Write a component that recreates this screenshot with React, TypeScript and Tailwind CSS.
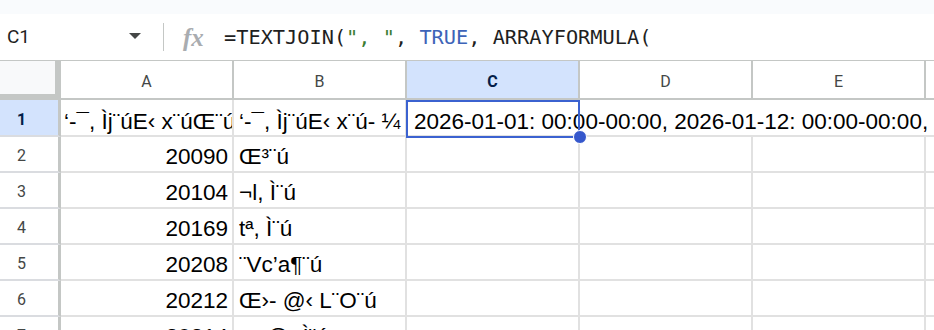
const columns = ["A", "B", "C", "D", "E"];

const rows: { num: string; a: string; b: string }[] = [
  { num: "2", a: "20090", b: "Œ³¨ú" },
  { num: "3", a: "20104", b: "¬l, Ì¨ú" },
  { num: "4", a: "20169", b: "tª, Ì¨ú" },
  { num: "5", a: "20208", b: "¨Vc’a¶¨ú" },
  { num: "6", a: "20212", b: "Œ›- @‹ L¨O¨ú" },
  { num: "7", a: "20214", b: "¬‹ @› Ì¨ú" },
];

const cellText = "font-['Liberation_Sans',Arial,sans-serif] text-[22.5px] leading-[26px] text-black whitespace-nowrap";

function FormulaBar() {
  return (
    <div className="flex h-[47px] items-center border-b border-[#c4c7c5] bg-white">
      <div className="flex w-[150px] items-center justify-between pl-[7px] pr-[9px]">
        <span className="font-['Roboto',Arial,sans-serif] text-[19px] text-[#1f1f1f]">C1</span>
        <span className="mt-[-3px] h-0 w-0 border-l-[6px] border-r-[6px] border-t-[6px] border-l-transparent border-r-transparent border-t-[#444746]" />
      </div>
      <div className="ml-[13px] h-[28px] w-px bg-[#c4c7c5]" />
      <span className="ml-[19px] w-[22px] font-['Liberation_Serif',serif] text-[25px] font-bold italic leading-none text-[#a9acb0]">
        fx
      </span>
      <div className="ml-[19px] whitespace-nowrap font-['DejaVu_Sans_Mono',monospace] text-[20.3px] text-[#1f1f1f]">
        =TEXTJOIN(<span className="text-[#3b7d32]">", "</span>, <span className="text-[#3d63b8]">TRUE</span>, ARRAYFORMULA(
      </div>
    </div>
  );
}

function HeaderRow() {
  return (
    <div className="flex h-[39px]">
      <div className="h-full w-[61px] shrink-0 border-b-[6px] border-r-[6px] border-[#c4c7c5] bg-[#f8f9fa]" />
      {columns.map((col) => (
        <div
          key={col}
          className={
            col === "C"
              ? "flex h-full w-[173px] shrink-0 items-center justify-center border-b-2 border-r-2 border-[#c4c7c5] bg-[#d3e3fd] pt-[4px] font-['Roboto',Arial,sans-serif] text-[16px] font-bold leading-[18px] text-[#041e49]"
              : "flex h-full w-[173px] shrink-0 items-center justify-center border-b-2 border-r-2 border-[#c4c7c5] bg-white pt-[4px] font-['Roboto',Arial,sans-serif] text-[16px] leading-[18px] text-[#444746]"
          }
        >
          {col}
        </div>
      ))}
      <div className="h-full flex-1 border-b-2 border-[#c4c7c5] bg-white" />
    </div>
  );
}

function FirstRow() {
  return (
    <div className="flex h-[37px]">
      <div className="flex h-full w-[61px] shrink-0 items-center border-b-2 border-r-[3px] border-b-[#dadce0] border-r-[#c4c7c5] bg-[#d3e3fd] pl-[17px] pt-[4px] font-['Roboto',Arial,sans-serif] text-[16px] font-bold leading-[18px] text-[#041e49]">
        1
      </div>
      <div className={`flex h-full w-[173px] shrink-0 items-end overflow-hidden border-b-2 border-r-2 border-[#e1e1e1] pl-[3px] ${cellText}`}>
        ‘-¯, Ìj¨úE‹ x¨úŒ¨ú
      </div>
      <div className={`flex h-full w-[173px] shrink-0 items-end overflow-hidden border-b-2 border-r-2 border-[#e1e1e1] pl-[5px] ${cellText}`}>
        ‘-¯, Ìj¨úE‹ x¨ú- ¼
      </div>
      <div className="relative h-full flex-1 border-b-2 border-[#e1e1e1]">
        <div className={`flex h-full items-end overflow-hidden pl-[7px] ${cellText}`}>
          2026-01-01: 00:00-00:00, 2026-01-12: 00:00-00:00, 2026-01-19: 00:00-00:00
        </div>
        {/* selection box + fill handle */}
        <div className="absolute left-[-1px] top-0 h-[38px] w-[174px] border-2 border-[#3b62d0]" />
        <div className="absolute left-[166px] top-[30px] h-[14px] w-[14px] rounded-full border border-white bg-[#3557cc]" />
      </div>
    </div>
  );
}

export default function App() {
  return (
    <div className="h-[330px] w-[934px] overflow-hidden bg-white">
      <div className="h-[14px] bg-[#f9fbfd]" />
      <FormulaBar />
      <HeaderRow />
      <FirstRow />
      {rows.map((row) => (
        <div key={row.num} className="flex h-[36px]">
          <div className="flex h-full w-[61px] shrink-0 items-center border-b-2 border-r-[3px] border-b-[#dadce0] border-r-[#c4c7c5] bg-white pl-[17px] pt-[4px] font-['Roboto',Arial,sans-serif] text-[16px] leading-[18px] text-[#444746]">
            {row.num}
          </div>
          <div className={`flex h-full w-[173px] shrink-0 items-end justify-end border-b-2 border-r-2 border-[#e1e1e1] pb-[1px] pr-[4px] ${cellText}`}>
            {row.a}
          </div>
          <div className={`flex h-full w-[173px] shrink-0 items-end overflow-hidden border-b-2 border-r-2 border-[#e1e1e1] pb-[1px] pl-[5px] ${cellText}`}>
            {row.b}
          </div>
          <div className="h-full w-[173px] shrink-0 border-b-2 border-r-2 border-[#e1e1e1]" />
          <div className="h-full w-[173px] shrink-0 border-b-2 border-r-2 border-[#e1e1e1]" />
          <div className="h-full w-[173px] shrink-0 border-b-2 border-r-2 border-[#e1e1e1]" />
          <div className="h-full flex-1 border-b-2 border-[#e1e1e1]" />
        </div>
      ))}
    </div>
  );
}
